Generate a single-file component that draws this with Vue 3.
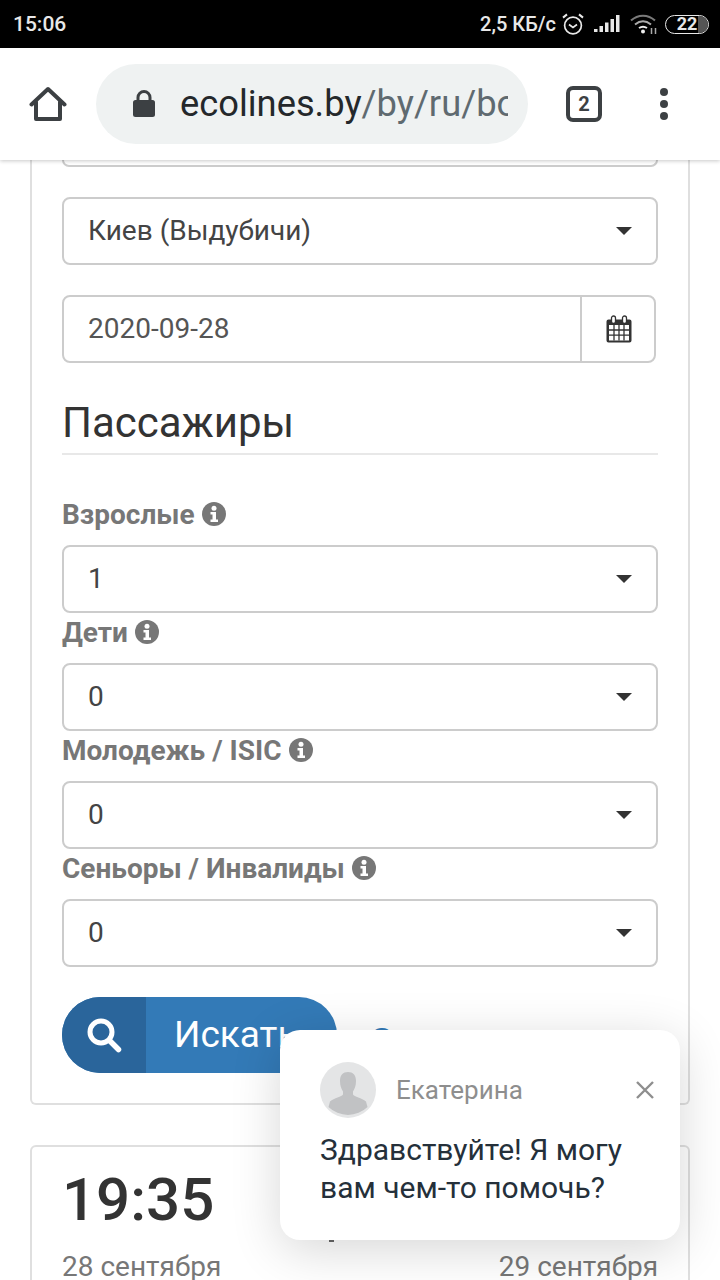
<script setup>
const groups = [
  { label: 'Взрослые', value: '1' },
  { label: 'Дети', value: '0' },
  { label: 'Молодежь / ISIC', value: '0' },
  { label: 'Сеньоры / Инвалиды', value: '0' }
]
</script>

<template>
  <div class="phone">
    <div class="status">
      <span class="clock">15:06</span>
      <div class="status-right">
        <span class="speed">2,5 КБ/с</span>
        <svg class="alarm" width="24" height="24" viewBox="0 0 24 24" fill="none" stroke="#e8e8e8" stroke-width="1.7">
          <circle cx="12" cy="13.5" r="8.4" />
          <path d="M8 12.500l4 3 4-3" />
          <path d="M2 5.6 6 2.4M22 5.6l-4-3.2" stroke-width="2" />
        </svg>
        <svg class="signal" width="26" height="20" viewBox="0 0 26 20" fill="#e8e8e8">
          <rect x="0" y="15" width="3.500" height="3" />
          <rect x="5.500" y="12" width="3.500" height="6" />
          <rect x="11" y="8.500" width="3.500" height="9.500" />
          <rect x="16.500" y="5" width="3.500" height="13" />
          <rect x="22" y="1" width="3.500" height="17" />
        </svg>
        <svg class="wifi" width="28" height="22" viewBox="0 0 28 22" fill="none" stroke="#7a7a7a" stroke-width="2">
          <path d="M1 7.500C8 1 18 1 25 7.500" />
          <path d="M5 11.500c5-4 11-4 16 0" stroke="#aaa" />
          <path d="M9 15c3-2 5-2 8 0" stroke="#eee" />
          <circle cx="13" cy="18.500" r="2" fill="#eee" stroke="none" />
          <path d="M21.500 15v6M25.500 15v6" stroke="#aaa" stroke-width="1.500" />
        </svg>
        <div class="battery">
          <span>22</span>
          <i></i>
        </div>
      </div>
    </div>

    <header class="toolbar">
      <svg class="home" width="38" height="38" viewBox="0 0 38 38" fill="none" stroke="#3c4043" stroke-width="4" stroke-linejoin="round" stroke-linecap="round">
        <path d="M2.500 19.500 19 4 35.500 19.500" />
        <path d="M7 17v17h24V17" />
      </svg>
      <div class="omnibox">
        <svg class="lock" width="24" height="30" viewBox="0 0 24 30">
          <path d="M6 12V8.500a6 6 0 0 1 12 0V12" fill="none" stroke="#3c4043" stroke-width="3" />
          <rect x="1" y="11" width="22" height="17" rx="2.500" fill="#3c4043" />
        </svg>
        <div class="url"><span class="host">ecolines.by</span><span class="path">/by/ru/booking</span></div>
      </div>
      <div class="tabs">2</div>
      <div class="dots"><i></i><i></i><i></i></div>
    </header>

    <main class="content">
      <section class="card form">
        <div class="cut-select"></div>

        <div class="select first">
          <span>Киев (Выдубичи)</span>
          <i class="caret"></i>
        </div>

        <div class="date">
          <span class="date-val">2020-09-28</span>
          <div class="date-btn">
            <svg width="26" height="28" viewBox="0 0 26 28" fill="none">
              <path d="M2.500 4.500h21a2 2 0 0 1 2 2v19a2 2 0 0 1-2 2h-21a2 2 0 0 1-2-2v-19a2 2 0 0 1 2-2z" fill="#333" />
              <rect x="3" y="10" width="20" height="15.500" fill="#fff" />
              <path d="M3 15h20M3 20.200h20M8 10v15.500M13 10v15.500M18 10v15.500" stroke="#333" stroke-width="1.300" />
              <rect x="5.500" y="1" width="4" height="7.500" rx="2" fill="#fff" stroke="#333" stroke-width="1.300" />
              <rect x="16.500" y="1" width="4" height="7.500" rx="2" fill="#fff" stroke="#333" stroke-width="1.300" />
            </svg>
          </div>
        </div>

        <h2 class="heading">Пассажиры</h2>

        <div class="groups">
          <div v-for="g in groups" :key="g.label" class="group">
            <div class="label">
              <span>{{ g.label }}</span>
              <svg width="24" height="24" viewBox="0 0 24 24">
                <circle cx="12" cy="12" r="12" fill="#777" />
                <circle cx="12" cy="6.200" r="2.500" fill="#fff" />
                <path d="M8.500 10h5.500v7.500h2V20H8.500v-2.500h2V12.500h-2z" fill="#fff" />
              </svg>
            </div>
            <div class="select">
              <span>{{ g.value }}</span>
              <i class="caret"></i>
            </div>
          </div>
        </div>

        <div class="actions">
          <button class="search">
            <span class="search-icon">
              <svg width="36" height="36" viewBox="0 0 36 36" fill="none" stroke="#fff">
                <circle cx="15" cy="15" r="11" stroke-width="5" />
                <path d="M23.500 23.500 32.500 32.500" stroke-width="5.500" stroke-linecap="round" />
              </svg>
            </span>
            <span class="search-text">Искать</span>
          </button>
          <span class="reset">С</span>
        </div>
      </section>

      <section class="card trip">
        <div class="time">19:35</div>
        <i class="tick"></i>
        <div class="dates">
          <span>28 сентября</span>
          <span>29 сентября</span>
        </div>
      </section>
    </main>

    <aside class="chat">
      <div class="chat-head">
        <div class="avatar">
          <svg width="56" height="56" viewBox="0 0 56 56">
            <circle cx="28" cy="28" r="28" fill="#e4e5e6" />
            <path d="M20 19c0-6 3-9 8-9s8 3 8 9c0 5-1.500 8-3 10.500v3c1 2 9 3.500 13 7l1.500 5.500a28 28 0 0 1-39 0L10 39.500c4-3.500 12-5 13-7v-3C21.500 27 20 24 20 19z" fill="#c1c2c4" />
          </svg>
        </div>
        <span class="agent">Екатерина</span>
        <svg class="close" width="20" height="20" viewBox="0 0 20 20" stroke="#8e8e8e" stroke-width="2.400">
          <path d="M2 2l16 16M18 2 2 18" />
        </svg>
      </div>
      <p class="chat-text">Здравствуйте! Я могу<br />вам чем-то помочь?</p>
    </aside>
  </div>
</template>

<style>
html, body { margin: 0; background: #fff; }
</style>

<style scoped>
* { box-sizing: border-box; }
.phone {
  position: relative;
  width: 720px;
  height: 1280px;
  overflow: hidden;
  background: #fff;
  font-family: Roboto, "Liberation Sans", sans-serif;
  color: #333;
}
.status {
  height: 48px;
  background: #000;
  color: #e8e8e8;
  display: flex;
  align-items: center;
  justify-content: space-between;
  padding: 0 11px 0 13px;
  font-weight: 500;
}
.clock { font-size: 21px; }
.status-right { display: flex; align-items: center; }
.speed { font-size: 20px; margin-right: 5px; }
.alarm { margin-right: 9px; }
.signal { margin-right: 10px; }
.wifi { margin-right: 7px; }
.battery {
  position: relative;
  width: 44px;
  height: 19px;
  border: 1.500px solid #e8e8e8;
  border-radius: 10px;
  font-size: 18px;
  font-weight: 700;
  line-height: 16px;
  text-align: center;
  overflow: hidden;
}
.battery span { position: relative; z-index: 1; }
.battery i {
  position: absolute;
  right: 0;
  top: 0;
  bottom: 0;
  width: 10px;
  background: #555;
}
.toolbar {
  position: relative;
  z-index: 2;
  height: 112px;
  background: #fff;
  box-shadow: 0 1px 4px rgba(0, 0, 0, 0.22);
  display: flex;
  align-items: center;
  padding: 0 0 0 29px;
}
.home { flex: none; }
.omnibox {
  margin-left: 29px;
  width: 432px;
  height: 80px;
  border-radius: 40px;
  background: #eff2f2;
  display: flex;
  align-items: center;
  padding: 0 20px 0 36px;
}
.lock { flex: none; }
.url {
  margin-left: 24px;
  flex: 1;
  overflow: hidden;
  white-space: nowrap;
  font-size: 36.300px;
  line-height: 44px;
}
.host { color: #24282b; }
.path { color: #5f6a70; }
.tabs {
  margin-left: 38px;
  width: 36px;
  height: 36px;
  border: 4px solid #3c4043;
  border-radius: 7px;
  font-size: 20px;
  font-weight: 700;
  color: #3c4043;
  display: flex;
  align-items: center;
  justify-content: center;
}
.dots {
  margin-left: 58px;
  display: flex;
  flex-direction: column;
  gap: 4px;
}
.dots i {
  display: block;
  width: 8px;
  height: 8px;
  border-radius: 50%;
  background: #3c4043;
}
.content {
  padding: 0 30px;
}
.card {
  border: 2px solid #dfdfdf;
  background: #fff;
}
.form {
  border-top: none;
  border-radius: 0 0 6px 6px;
  height: 945px;
  padding: 0 30px;
}
.cut-select {
  height: 7px;
  border: 2px solid #ccc;
  border-top: none;
  border-radius: 0 0 8px 8px;
}
.select {
  height: 68px;
  border: 2px solid #ccc;
  border-radius: 8px;
  display: flex;
  align-items: center;
  justify-content: space-between;
  padding: 0 24px 2px 24px;
  font-size: 28px;
  color: #444;
}
.select.first { margin-top: 30px; }
.caret {
  display: block;
  width: 0;
  height: 0;
  margin-top: 2px;
  border-left: 8.500px solid transparent;
  border-right: 8.500px solid transparent;
  border-top: 8.500px solid #333;
}
.date {
  margin-top: 30px;
  width: 594px;
  height: 68px;
  border: 2px solid #ccc;
  border-radius: 8px;
  display: flex;
  align-items: center;
}
.date-val {
  flex: 1;
  padding: 0 0 2px 24px;
  font-size: 28px;
  color: #555;
}
.date-btn {
  width: 74px;
  height: 100%;
  padding-left: 2px;
  border-left: 2px solid #ccc;
  display: flex;
  align-items: center;
  justify-content: center;
}
.heading {
  margin: 30px 0 0;
  height: 62px;
  padding-top: 7px;
  border-bottom: 2px solid #e8e8e8;
  font-size: 42px;
  line-height: 46px;
  font-weight: 400;
  color: #333;
}
.groups { margin-top: 40px; }
.label {
  height: 50px;
  display: flex;
  align-items: center;
  gap: 7px;
  font-size: 28px;
  font-weight: 700;
  color: #777;
  padding-bottom: 12px;
}
.label svg { flex: none; }
.actions {
  margin-top: 30px;
  height: 76px;
  display: flex;
  align-items: center;
}
.search {
  width: 275px;
  height: 76px;
  padding: 0;
  border: none;
  border-radius: 38px;
  overflow: hidden;
  display: flex;
  background: #337ab7;
  color: #fff;
  font: inherit;
}
.search-icon {
  width: 84px;
  height: 100%;
  background: #2a659b;
  display: flex;
  align-items: center;
  justify-content: center;
}
.search-text {
  padding-left: 28px;
  font-size: 37px;
  line-height: 76px;
}
.reset {
  margin: 12px 0 0 32px;
  font-size: 37px;
  color: #337ab7;
}
.trip {
  position: relative;
  margin-top: 40px;
  height: 300px;
  border-radius: 6px 6px 0 0;
  padding: 0 30px;
}
.tick {
  position: absolute;
  left: 297px;
  top: 84px;
  width: 5px;
  height: 11px;
  background: #666;
}
.time {
  margin-top: 18px;
  font-size: 60px;
  line-height: 70px;
  font-weight: 500;
  color: #333;
}
.dates {
  margin-top: 16px;
  display: flex;
  justify-content: space-between;
  font-size: 28px;
  line-height: 32px;
  color: #777;
}
.chat {
  position: absolute;
  left: 280px;
  top: 1030px;
  width: 400px;
  height: 210px;
  padding: 32px 25px 0 40px;
  background: #fff;
  border-radius: 20px;
  box-shadow: 0 10px 50px rgba(0, 0, 0, 0.16);
  z-index: 3;
}
.chat-head {
  display: flex;
  align-items: center;
}
.avatar { width: 56px; height: 56px; flex: none; }
.avatar svg { display: block; }
.agent {
  margin-left: 20px;
  flex: 1;
  font-size: 26px;
  color: #8e8e8e;
}
.close { flex: none; }
.chat-text {
  margin: 13px 0 0;
  font-size: 30px;
  line-height: 38px;
  color: #25303a;
}
</style>
